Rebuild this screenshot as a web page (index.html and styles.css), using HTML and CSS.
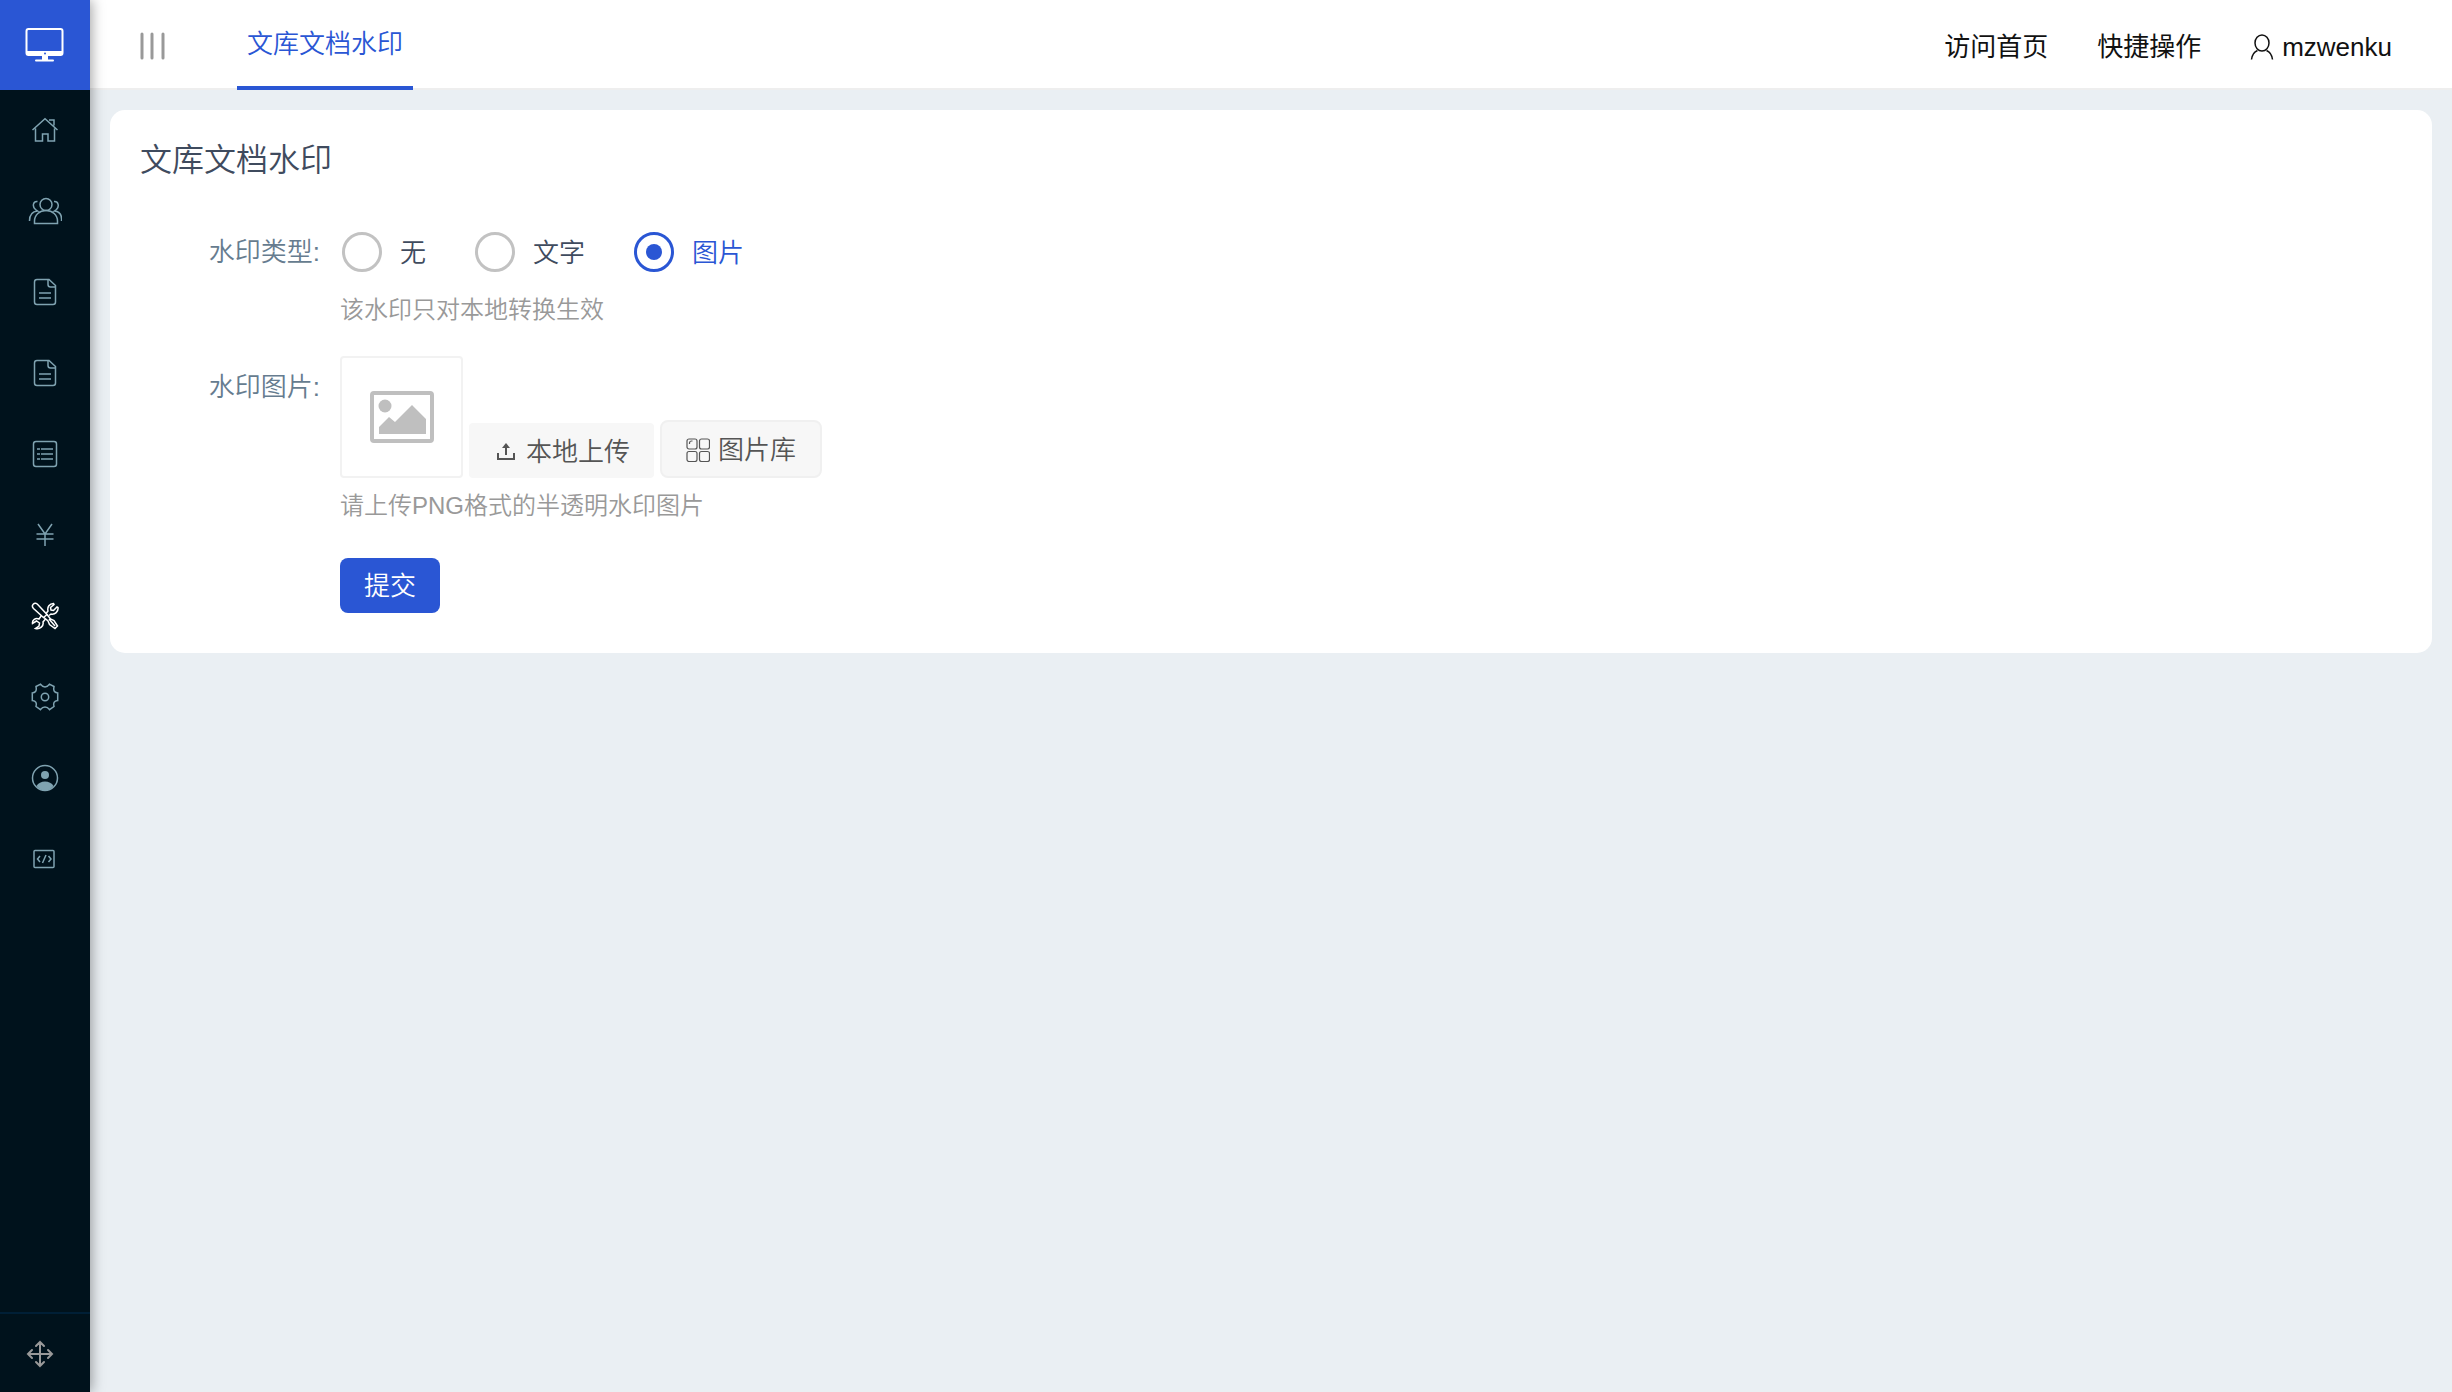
FILE: index.html
```html
<!DOCTYPE html>
<html lang="zh-CN">
<head>
  <meta charset="UTF-8">
  <meta name="viewport" content="width=device-width, initial-scale=1">
  <title>文库文档水印</title>
  <link rel="stylesheet" href="styles.css">
</head>
<body>
  <aside class="sidebar">
    <a href="#" class="logo" aria-label="后台首页">
      <svg width="40" height="36" viewBox="0 0 40 36" fill="none" stroke="currentColor">
        <rect x="1.500" y="2" width="36" height="26" rx="2" stroke-width="2"/>
        <path d="M2 26h35" stroke-width="4"/>
        <path d="M11 33.500h17" stroke-width="2" stroke-linecap="round"/>
        <path d="M17 28h6v5h-6z" fill="currentColor" stroke="none"/>
        <circle cx="20" cy="26.500" r="1" fill="#2a56d4" stroke="none"/>
      </svg>
    </a>
    <nav class="menu">
      <a href="#" aria-label="首页">
        <svg width="28" height="28" viewBox="0 0 28 28">
          <path d="M1.500 14L14 2.800 26.500 14M4.500 12.500V25h7v-7h5.500v7h6.500V12.500M18 4h5v5.500"/>
        </svg>
      </a>
      <a href="#" aria-label="用户">
        <svg width="34" height="28" viewBox="0 0 34 28">
          <circle cx="18" cy="7.500" r="6"/>
          <path d="M6.500 26.500V24c0-6 5-10.500 11.500-10.500S29.500 18 29.500 24v2.500zM9.500 4.500C5 4 4 9.500 7.500 12.500l2 1.500C4 14.500 1.500 18.500 1.500 24M26 4.500c4.500-.5 5.500 5 2.500 8L26.500 14c5.500.5 7.500 4.500 7 10"/>
        </svg>
      </a>
      <a href="#" aria-label="文档">
        <svg width="28" height="28" viewBox="0 0 28 28">
          <path d="M6 1.500h12l6.500 6V24a2.500 2.500 0 0 1-2.500 2.500H6A2.500 2.500 0 0 1 3.500 24V4A2.500 2.500 0 0 1 6 1.500zM17 2v4.500A2.500 2.500 0 0 0 19.500 9h5M8 15h12M8 20h12"/>
        </svg>
      </a>
      <a href="#" aria-label="文章">
        <svg width="28" height="28" viewBox="0 0 28 28">
          <path d="M6 1.500h12l6.500 6V24a2.500 2.500 0 0 1-2.500 2.500H6A2.500 2.500 0 0 1 3.500 24V4A2.500 2.500 0 0 1 6 1.500zM17 2v4.500A2.500 2.500 0 0 0 19.500 9h5M8 15h12M8 20h12"/>
        </svg>
      </a>
      <a href="#" aria-label="列表">
        <svg width="28" height="28" viewBox="0 0 28 28">
          <rect x="2.500" y="1.500" width="23" height="25" rx="2.500"/>
          <path d="M6 9h3M10 9h12M6 14h3M10 14h12M6 19h3M10 19h12"/>
        </svg>
      </a>
      <a href="#" aria-label="财务">
        <svg width="28" height="28" viewBox="0 0 28 28">
          <path d="M7 3l7 10 7-10M14 13v12M5.500 13h17M5.500 18h17"/>
        </svg>
      </a>
      <a href="#" class="active" aria-label="工具">
        <svg width="28" height="28" viewBox="0 0 28 28">
          <path d="M2.200 2.200c1.500-1.500 3.300-1 4.500.3l9.300 10-3.500 3L2.500 6.500C1.200 5 1 3.400 2.200 2.200z"/>
          <path d="M16 12.500l3.500 4.500 3.500 1.500 3.500 5.500-2.500 2.500-5.500-4L17 19l-4-3.500M18 17l6 7"/>
          <path d="M15 11.500l2-2.500c-1-4 1.500-7.500 5.500-7.500l.5 1-3.500 3 .5 2.500 2.500.5 3.500-3.500 1 .5c.5 4-3 7.500-7 6.500l-2 1.500M10.500 13.500L8 17c-3.500-1.500-7 1-6.500 4.500l4-2.500 3 2-.5 3-3.500 2.500c4.500 1 8.500-2.500 7.500-6.500l2.500-3"/>
        </svg>
      </a>
      <a href="#" aria-label="设置">
        <svg width="28" height="28" viewBox="0 0 28 28">
          <path d="M9.500 1.200C11 3.500 12 4 14 4s3-.5 4.500-2.800L23 3.500c-.8 3.500-.3 6 3.700 6.500v7.500c-3.700.5-4.700 2.500-3.700 6l-4.500 3.200C17 24.500 16 24 14 24s-3 .5-4.500 2.700L5 23.500c1-3.500 0-5.500-3.700-6V10C5.300 9.500 5.800 7 5 3.500z"/>
          <circle cx="14" cy="14" r="3.700"/>
        </svg>
      </a>
      <a href="#" aria-label="账号">
        <svg width="28" height="28" viewBox="0 0 28 28">
          <circle cx="14" cy="14" r="12.500"/>
          <circle cx="14" cy="11" r="4" class="solid"/>
          <path d="M5.500 22c1.500-3 5-4.500 8.500-4.500s7 1.500 8.500 4.500C20 25 17 26.500 14 26.500S8 25 5.500 22z" class="solid"/>
        </svg>
      </a>
      <a href="#" aria-label="开发">
        <svg width="28" height="28" viewBox="0 0 28 28">
          <rect x="3" y="5.500" width="20" height="17" rx="1" />
          <path d="M9 11l-2.500 3L9 17M17.500 11l2.500 3-2.500 3M15 10l-3.500 8"/>
        </svg>
      </a>
    </nav>
    <button type="button" class="sidebar-bottom" aria-label="移动">
      <svg width="28" height="28" viewBox="0 0 28 28">
        <path d="M14 2v24M2 14h24M10 6l4-4 4 4M10 22l4 4 4-4M6 10l-4 4 4 4M22 10l4 4-4 4"/>
      </svg>
    </button>
  </aside>

  <div class="page">
    <header class="header">
      <button type="button" class="toggle" aria-label="收起菜单">
        <svg width="26" height="30" viewBox="0 0 26 30">
          <path d="M2 3v24M12 3v24M23 3v24"/>
        </svg>
      </button>
      <a href="#" class="tab">文库文档水印</a>
      <div class="header-right">
        <a href="#">访问首页</a>
        <a href="#">快捷操作</a>
        <a href="#" class="user">
          <svg width="24" height="28" viewBox="0 0 24 28">
            <ellipse cx="12" cy="10" rx="7" ry="8"/>
            <path d="M1.500 26.500c.5-4 2.500-7.500 6-9M22.500 26.500c-.5-4-2.500-7.500-6-9"/>
          </svg>
          mzwenku
        </a>
      </div>
    </header>

    <main class="card">
      <h1>文库文档水印</h1>
      <form>
        <div class="row">
          <span class="row-label" id="type-label">水印类型:</span>
          <div class="field">
            <div class="radios" role="radiogroup" aria-labelledby="type-label">
              <label><input type="radio" name="type" value="0"><span>无</span></label>
              <label><input type="radio" name="type" value="1"><span>文字</span></label>
              <label><input type="radio" name="type" value="2" checked><span>图片</span></label>
            </div>
            <p class="help">该水印只对本地转换生效</p>
          </div>
        </div>

        <div class="row row-image">
          <span class="row-label">水印图片:</span>
          <div class="field">
            <div class="upload">
              <div class="thumb">
                <svg width="66" height="54" viewBox="0 0 66 54">
                  <rect x="3" y="3" width="60" height="48" rx="2" fill="none" stroke="currentColor" stroke-width="4"/>
                  <circle cx="16" cy="16" r="6.500" fill="currentColor"/>
                  <path d="M10 44v-7l10-10 6 5 17-17 14 14v15z" fill="currentColor"/>
                </svg>
              </div>
              <button type="button" class="btn-upload">
                <svg width="20" height="20" viewBox="0 0 20 20" fill="none" stroke="currentColor" stroke-width="2">
                  <path d="M2 11v6h16v-6M10 13V3"/>
                  <path d="M10 1l4 5H6z" fill="currentColor" stroke="none"/>
                </svg>
                本地上传
              </button>
              <button type="button" class="btn-library">
                <svg width="24" height="24" viewBox="0 0 24 24" fill="none" stroke="currentColor" stroke-width="1.2">
                  <rect x="1" y="1" width="10" height="10" rx="2"/>
                  <rect x="13.500" y="1" width="10" height="10" rx="2"/>
                  <rect x="1" y="13.500" width="10" height="10" rx="2"/>
                  <rect x="13.500" y="13.500" width="10" height="10" rx="2"/>
                  <path d="M3.500 6V5a2 2 0 0 1 2-2h1"/>
                </svg>
                图片库
              </button>
            </div>
            <p class="help">请上传PNG格式的半透明水印图片</p>
          </div>
        </div>

        <button type="submit" class="submit">提交</button>
      </form>
    </main>
  </div>
</body>
</html>
```

FILE: styles.css
```css
* {
  box-sizing: border-box;
}
body {
  margin: 0;
  display: flex;
  min-height: 100vh;
  background: #eaeff3;
  color: #3f4b5e;
  font-family: "Liberation Sans", "Noto Sans CJK SC", sans-serif;
  font-size: 26px;
  font-weight: 350;
  line-height: 40px;
}
a {
  color: inherit;
  text-decoration: none;
}
button {
  font: inherit;
  border: none;
  padding: 0;
  cursor: pointer;
}
svg {
  display: block;
  flex: none;
}

/* sidebar */
.sidebar {
  display: flex;
  flex-direction: column;
  flex: none;
  width: 90px;
  background: #00121c;
  box-shadow: 2px 0 12px rgba(0,0,0,0.35);
  z-index: 2;
}
.logo {
  display: flex;
  align-items: center;
  justify-content: center;
  height: 90px;
  background: #2a56d4;
  color: #fff;
}
.menu {
  flex: 1;
}
.menu a {
  display: flex;
  align-items: center;
  justify-content: center;
  height: 81px;
  padding-bottom: 1px;
  color: #7fa3b1;
}
.menu a.active {
  color: #fff;
}
.menu svg {
  fill: none;
  stroke: currentColor;
  stroke-width: 1.5;
}
.menu .solid {
  fill: currentColor;
  stroke: none;
}
.sidebar-bottom {
  height: 80px;
  padding: 2px 0 0 26px;
  border-top: 2px solid #001f36;
  background: none;
  color: #999;
}
.sidebar-bottom svg,
.toggle svg {
  fill: none;
  stroke: currentColor;
  stroke-width: 2;
  stroke-linecap: round;
}

/* header */
.page {
  flex: 1;
  min-width: 0;
}
.header {
  display: flex;
  height: 90px;
  padding: 0 60px 0 50px;
  background: #fff;
  border-bottom: 2px solid #eee;
}
.toggle {
  padding-top: 3px;
  background: none;
  color: #999;
}
.toggle svg {
  stroke-width: 3;
}
.tab {
  height: 90px;
  margin-left: 71px;
  padding: 0 10px;
  border-bottom: 4px solid #2a56d4;
  color: #2a56d4;
  line-height: 89px;
}
.header-right {
  display: flex;
  align-items: center;
  gap: 49px;
  margin-left: auto;
  padding-top: 5px;
  color: #111;
  font-weight: 400;
}
.user {
  display: flex;
  align-items: center;
  gap: 8px;
}
.user svg {
  fill: none;
  stroke: currentColor;
  stroke-width: 1.5;
}

/* form */
.card {
  margin: 20px;
  padding: 30px 30px 40px;
  background: #fff;
  border-radius: 15px;
}
h1 {
  margin: 0 0 52px;
  font-size: 32px;
  font-weight: 350;
}
.row {
  display: grid;
  grid-template-columns: 180px 1fr;
  column-gap: 20px;
}
.row-label {
  color: #667c8f;
  text-align: right;
}
.row-image {
  margin-top: 28px;
}
.row-image .row-label {
  padding-top: 11px;
}
.row-image .help {
  margin-top: 10px;
}
.radios {
  display: flex;
  gap: 47px;
}
.radios label {
  display: flex;
  align-items: center;
  gap: 18px;
  cursor: pointer;
}
.radios span {
  padding-top: 2px;
  line-height: 38px;
}
.radios input {
  appearance: none;
  display: grid;
  place-items: center;
  width: 40px;
  height: 40px;
  margin: 0 0 0 2px;
  border: 3px solid #c2c2c2;
  border-radius: 50%;
}
.radios input:checked {
  border-color: #2a56d4;
}
.radios input:checked::before {
  content: "";
  width: 16px;
  height: 16px;
  border-radius: 50%;
  background: #2a56d4;
}
.radios input:checked + span {
  color: #2a56d4;
}
.help {
  margin: 20px 0 0;
  color: #999;
  font-size: 24px;
  line-height: 36px;
}
.upload {
  display: flex;
  align-items: flex-end;
  gap: 6px;
}
.thumb {
  display: flex;
  align-items: center;
  justify-content: center;
  width: 123px;
  height: 122px;
  border: 2px solid #f2f2f2;
  border-radius: 4px;
  color: #bfbfbf;
}
.btn-upload,
.btn-library {
  display: flex;
  align-items: center;
  background: #f7f7f7;
  color: #555;
}
.btn-upload {
  gap: 10px;
  height: 55px;
  padding: 2px 24px 0 27px;
  border-radius: 4px;
}
.btn-library {
  gap: 8px;
  height: 58px;
  padding: 2px 24px 0;
  border: 2px solid #f0f0f0;
  border-radius: 8px;
}
.submit {
  display: block;
  width: 100px;
  height: 55px;
  margin: 34px 0 0 200px;
  border-radius: 8px;
  background: #2a56d4;
  color: #fff;
}
```
